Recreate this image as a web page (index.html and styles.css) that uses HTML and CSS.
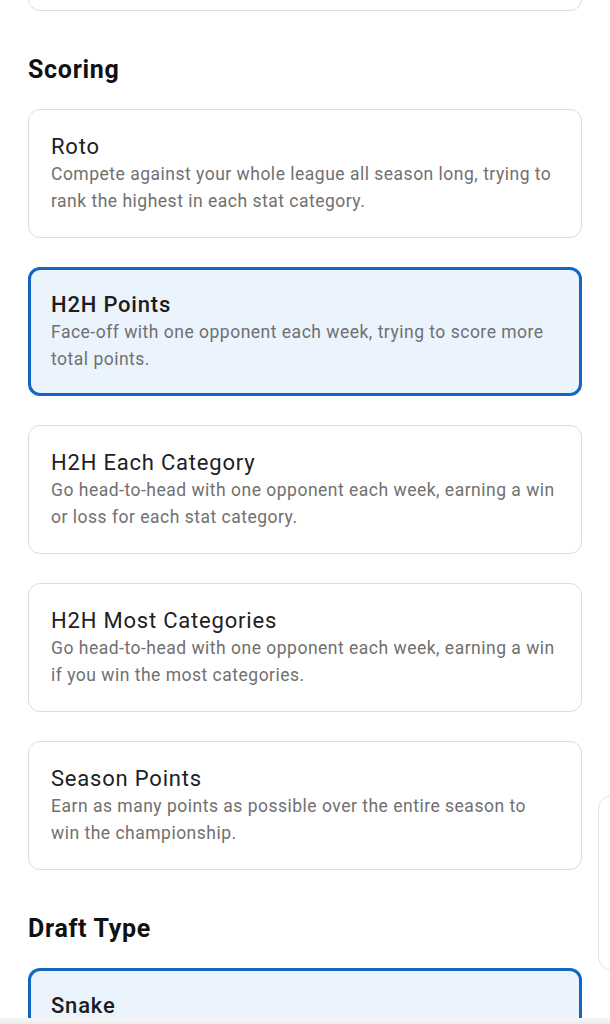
FILE: index.html
```html
<!DOCTYPE html>
<html lang="en">
<head>
    <meta charset="UTF-8">
    <meta name="viewport" content="width=device-width, initial-scale=1.0">
    <title>League Settings</title>
    <link rel="stylesheet" href="styles.css">
</head>
<body>
    <main class="settings">
        <!-- previous section, scrolled mostly out of view -->
        <div class="option option-prev"></div>

        <section class="group">
            <h2 class="group-title">Scoring</h2>
            <div class="option">
                <h3>Roto</h3>
                <p>Compete against your whole league all season long, trying to rank the highest in each stat category.</p>
            </div>
            <div class="option selected">
                <h3>H2H Points</h3>
                <p>Face-off with one opponent each week, trying to score more total points.</p>
            </div>
            <div class="option">
                <h3>H2H Each Category</h3>
                <p>Go head-to-head with one opponent each week, earning a win or loss for each stat category.</p>
            </div>
            <div class="option">
                <h3>H2H Most Categories</h3>
                <p>Go head-to-head with one opponent each week, earning a win if you win the most categories.</p>
            </div>
            <div class="option">
                <h3>Season Points</h3>
                <p>Earn as many points as possible over the entire season to win the championship.</p>
            </div>
        </section>

        <section class="group">
            <h2 class="group-title">Draft Type</h2>
            <div class="option selected">
                <h3>Snake</h3>
            </div>
        </section>
    </main>

    <div class="side-tab"></div>
    <div class="bottom-edge"></div>
</body>
</html>
```

FILE: styles.css
```css
body {
    font-family: Roboto, "Noto Sans", Arial, sans-serif;
    margin: 0;
    padding: 0;
    background-color: #fff;
    overflow: hidden;
}
.settings {
    padding: 0 28px;
    margin-top: -118px;
}
.option-prev {
    height: 129px;
    padding: 0;
}
.group-title {
    font-size: 25px;
    font-weight: 700;
    letter-spacing: 0.7px;
    line-height: 30px;
    color: #111;
    margin: 44px 0 24px;
}
.option {
    box-sizing: border-box;
    border: 1px solid #dcdcdc;
    border-radius: 12px;
    padding: 23px 22px 22px;
    margin-bottom: 29px;
    background: #fff;
}
.option h3 {
    margin: 0;
    font-size: 22px;
    font-weight: 400;
    letter-spacing: 0.8px;
    line-height: 28px;
    color: #202124;
}
.option p {
    margin: 0;
    font-size: 17.5px;
    letter-spacing: 0.5px;
    line-height: 27px;
    color: #707070;
}
.option.selected {
    border: 3px solid #1366c1;
    background: #ebf3fd;
    padding: 21px 20px 20px;
}
.option.selected h3 {
    font-weight: 500;
    color: #1b1d21;
}
.side-tab {
    position: fixed;
    left: 598px;
    top: 795px;
    width: 40px;
    height: 174px;
    border: 1px solid #e2e2e2;
    border-radius: 14px;
    background: #fff;
}
.bottom-edge {
    position: fixed;
    left: 0;
    bottom: 0;
    width: 100%;
    height: 6px;
    background: linear-gradient(#f6f6f6, #ececec);
}
```
